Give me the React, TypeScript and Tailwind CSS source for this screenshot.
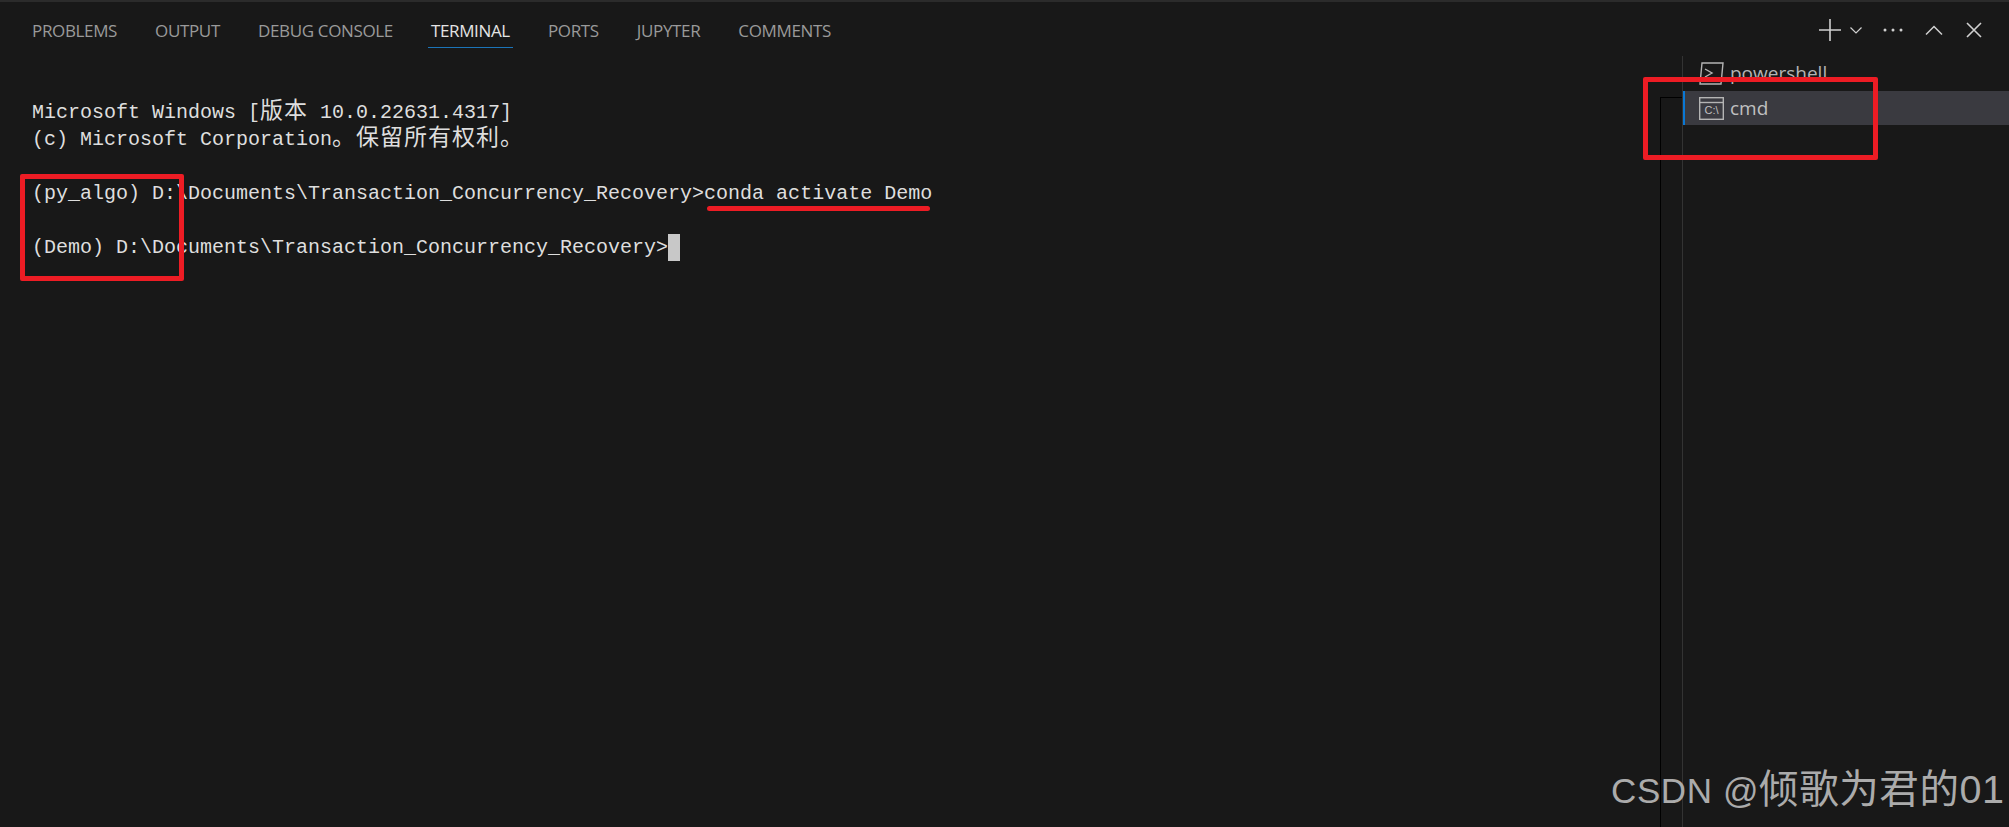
const TABS = ["PROBLEMS", "OUTPUT", "DEBUG CONSOLE", "TERMINAL", "PORTS", "JUPYTER", "COMMENTS"];

const MONO = "font-['Liberation_Mono','Noto_Sans_CJK_SC',monospace]";

function PanelTab({ label }: { label: string }) {
  const active = label === "TERMINAL";
  return (
    <div
      className={
        active
          ? "flex h-[30px] items-start justify-center border-b-[1.5px] border-[#1b74b8] px-[3px] text-[#e4e4e4]"
          : "flex h-[30px] items-start justify-center px-[3px] text-[#9a9a9a]"
      }
    >
      {label}
    </div>
  );
}

function Actions() {
  return (
    <div className="flex items-center text-[#d0d0d0]">
      <svg width="24" height="24" viewBox="0 0 24 24" stroke="currentColor" strokeWidth="1.6" fill="none">
        <path d="M1 12h22M12 1v22" />
      </svg>
      <svg className="ml-[7px]" width="14" height="14" viewBox="0 0 14 14" stroke="currentColor" strokeWidth="1.2" fill="none">
        <path d="M1.5 4.5 7 10l5.5-5.5" />
      </svg>
      <svg className="ml-[20px]" width="20" height="6" viewBox="0 0 20 6" fill="currentColor">
        <circle cx="2" cy="3" r="1.5" />
        <circle cx="10" cy="3" r="1.5" />
        <circle cx="18" cy="3" r="1.5" />
      </svg>
      <svg className="ml-[22px]" width="18" height="12" viewBox="0 0 18 12" stroke="currentColor" strokeWidth="1.5" fill="none">
        <path d="M1 10.5 9 2.5l8 8" />
      </svg>
      <svg className="ml-[23px]" width="16" height="16" viewBox="0 0 16 16" stroke="currentColor" strokeWidth="1.6" fill="none">
        <path d="m1 1 14 14M15 1 1 15" />
      </svg>
    </div>
  );
}

function PowershellIcon() {
  return (
    <svg width="25" height="23" viewBox="0 0 25 23" stroke="#b4b4b4" strokeWidth="1.4" fill="none">
      <path d="M3 1h21l-2 21H1z" />
      <path d="m6 7 7 4-7 4" />
    </svg>
  );
}

function CmdIcon() {
  return (
    <svg width="25" height="23" viewBox="0 0 25 23" fill="none">
      <rect x="0.7" y="0.7" width="23.6" height="21.6" stroke="#b4b4b4" strokeWidth="1.4" />
      <path d="M1 5.5h23" stroke="#b4b4b4" strokeWidth="1.4" />
      <text x="12.5" y="17" fill="#c0c0c0" fontSize="11" textAnchor="middle" fontFamily="Liberation Sans">C:\</text>
    </svg>
  );
}

function Cjk({ children }: { children: string }) {
  return <span className="text-[23px] tracking-[1px] leading-none">{children}</span>;
}

export default function App() {
  return (
    <div className="relative flex h-[827px] w-[2009px] flex-col overflow-hidden border-t-2 border-[#2b2b2b] bg-[#181818]">
      <div className="flex h-[54px] shrink-0 items-start justify-between pl-[29px] pr-[27px] pt-[16px]">
        <div className="flex gap-[32px] font-['Open_Sans',sans-serif] text-[17px] tracking-[-0.35px] leading-[26px]">
          {TABS.map((t) => (
            <PanelTab key={t} label={t} />
          ))}
        </div>
        <div>
          <Actions />
        </div>
      </div>

      <div className="flex min-h-0 flex-1">
        {/* terminal output */}
        <div className={`${MONO} flex-1 pl-[32px] pt-[43px] text-[20px] leading-[27px] text-[#dedede]`}>
          <div>Microsoft Windows [<Cjk>版本</Cjk> 10.0.22631.4317]</div>
          <div>(c) Microsoft Corporation<Cjk>。保留所有权利。</Cjk></div>
          <div className="h-[27px]" />
          <div>(py_algo) D:\Documents\Transaction_Concurrency_Recovery&gt;conda activate Demo</div>
          <div className="h-[27px]" />
          <div className="flex items-center">
            (Demo) D:\Documents\Transaction_Concurrency_Recovery&gt;
            <span className="h-[27px] w-[12px] bg-[#c8c8c8]" />
          </div>
        </div>

        {/* scrollbar gutter + terminal list */}
        <div className="mt-[41px] flex w-[349px] shrink-0">
          <div className="w-[22px] border-l border-t border-black" />
          <div className="-mt-[41px] flex-1 border-l border-[#333333]">
            <div className="flex h-[35px] items-center gap-[6px] pl-[16px] font-['Open_Sans',sans-serif] text-[19px] text-[#b4b4b4]">
              <PowershellIcon />
              powershell
            </div>
            <div className="flex h-[34px] items-center gap-[6px] border-l-2 border-[#0a78d4] bg-[#3a3a40] pl-[14px] font-['Open_Sans',sans-serif] text-[19px] text-[#c0c0c0]">
              <CmdIcon />
              cmd
            </div>
          </div>
        </div>
      </div>

      {/* annotations drawn over the screenshot */}
      <div className="absolute left-[20px] top-[172px] h-[107px] w-[164px] rounded-[2px] border-[5px] border-[#ed1c24]" />
      <div className="absolute left-[707px] top-[204px] h-[5px] w-[223px] rounded-full bg-[#ed1c24]" />
      <div className="absolute left-[1643px] top-[75px] h-[83px] w-[235px] rounded-[2px] border-[5px] border-[#ed1c24]" />
      <div className="absolute left-[1611px] top-[767px] font-['Liberation_Sans','Noto_Sans_CJK_SC',sans-serif] text-[35px] leading-[44px] tracking-[0.6px] whitespace-nowrap text-[#ababab]">
        CSDN @<span className="text-[39.5px] leading-none">倾歌为君的01</span>
      </div>
    </div>
  );
}
